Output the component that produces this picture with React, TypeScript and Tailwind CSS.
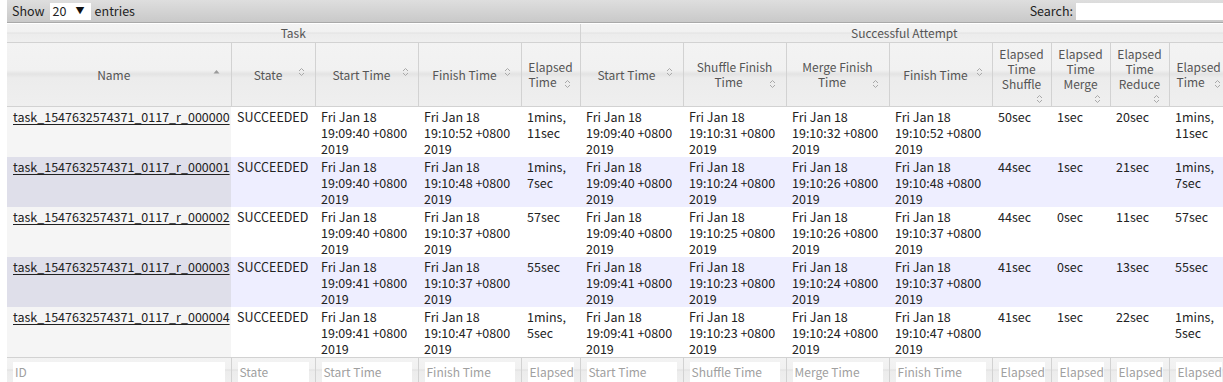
import React from "react";

type Head = {
  lines: string[];
  w: number;
  iconTop: number;
  iconRight: number;
  sorted?: boolean;
  narrow?: boolean;
  lastPr?: number;
};

const heads: Head[] = [
  { lines: ["Name"], w: 224, iconTop: 26, iconRight: 11, sorted: true },
  { lines: ["State"], w: 84, iconTop: 24, iconRight: 10 },
  { lines: ["Start Time"], w: 103, iconTop: 24, iconRight: 9 },
  { lines: ["Finish Time"], w: 103, iconTop: 24, iconRight: 10 },
  { lines: ["Elapsed", "Time"], w: 59, iconTop: 36, iconRight: 9, narrow: true, lastPr: 16 },
  { lines: ["Start Time"], w: 103, iconTop: 24, iconRight: 10 },
  { lines: ["Shuffle Finish", "Time"], w: 103, iconTop: 36, iconRight: 10, narrow: true, lastPr: 12 },
  { lines: ["Merge Finish", "Time"], w: 103, iconTop: 36, iconRight: 10, narrow: true, lastPr: 11 },
  { lines: ["Finish Time"], w: 103, iconTop: 24, iconRight: 9 },
  { lines: ["Elapsed", "Time", "Shuffle"], w: 59, iconTop: 51, iconRight: 8, narrow: true },
  { lines: ["Elapsed", "Time", "Merge"], w: 59, iconTop: 51, iconRight: 9, narrow: true },
  { lines: ["Elapsed", "Time", "Reduce"], w: 59, iconTop: 51, iconRight: 9, narrow: true },
  { lines: ["Elapsed", "Time"], w: 59, iconTop: 36, iconRight: 7, narrow: true, lastPr: 16 },
];

const filters = [
  "ID",
  "State",
  "Start Time",
  "Finish Time",
  "Elapsed",
  "Start Time",
  "Shuffle Time",
  "Merge Time",
  "Finish Time",
  "Elapsed",
  "Elapsed",
  "Elapsed",
  "Elapsed",
];

type Row = {
  id: string;
  start: string;
  finish: string;
  elapsed: string[];
  aStart: string;
  shuffle: string;
  merge: string;
  aFinish: string;
  es: string;
  em: string;
  er: string;
};

const rows: Row[] = [
  { id: "000000", start: "19:09:40", finish: "19:10:52", elapsed: ["1mins,", "11sec"], aStart: "19:09:40", shuffle: "19:10:31", merge: "19:10:32", aFinish: "19:10:52", es: "50sec", em: "1sec", er: "20sec" },
  { id: "000001", start: "19:09:40", finish: "19:10:48", elapsed: ["1mins,", "7sec"], aStart: "19:09:40", shuffle: "19:10:24", merge: "19:10:26", aFinish: "19:10:48", es: "44sec", em: "1sec", er: "21sec" },
  { id: "000002", start: "19:09:40", finish: "19:10:37", elapsed: ["57sec"], aStart: "19:09:40", shuffle: "19:10:25", merge: "19:10:26", aFinish: "19:10:37", es: "44sec", em: "0sec", er: "11sec" },
  { id: "000003", start: "19:09:41", finish: "19:10:37", elapsed: ["55sec"], aStart: "19:09:41", shuffle: "19:10:23", merge: "19:10:24", aFinish: "19:10:37", es: "41sec", em: "0sec", er: "13sec" },
  { id: "000004", start: "19:09:41", finish: "19:10:47", elapsed: ["1mins,", "5sec"], aStart: "19:09:41", shuffle: "19:10:23", merge: "19:10:24", aFinish: "19:10:47", es: "41sec", em: "1sec", er: "22sec" },
];

function SortIcon() {
  return (
    <svg width="7" height="10" viewBox="0 0 7 10" fill="none" stroke="#a8a8a8" strokeWidth="1">
      <path d="M1 4 L3.5 1.5 L6 4" />
      <path d="M1 6 L3.5 8.5 L6 6" />
    </svg>
  );
}

function SortedIcon() {
  return (
    <svg width="7" height="5" viewBox="0 0 7 5">
      <path d="M0.5 4.5 L3.5 1 L6.5 4.5 Z" fill="#9a9a9a" />
    </svg>
  );
}

function DateCell({ t }: { t: string }) {
  return (
    <>
      <div>Fri Jan 18</div>
      <div>{t} +0800</div>
      <div>2019</div>
    </>
  );
}

const headBg =
  "bg-[linear-gradient(to_bottom,#f3f3f3_0%,#f1f1f1_44%,#e3e3e3_50%,#ececec_56%,#efefef_100%)]";

export default function App() {
  const td = "align-top pl-[6px] pr-[2px] pt-[2px] text-left";
  return (
    <div className="w-[1223px] h-[382px] overflow-hidden bg-white font-['Noto_Sans_CJK_SC','Noto_Sans',sans-serif] text-[12.5px] text-[#222]">
      <div className="pl-[7px] w-[1228px]">
        {/* toolbar */}
        <div className="h-[23px] flex items-center justify-between bg-[linear-gradient(to_bottom,#dedede,#c9c9c9)] border-b border-[#a9a9a9] pl-[5px] pr-[4px] leading-[16px]">
          <div className="flex items-center">
            <span>Show</span>
            <div className="ml-[5px] mr-[4px] w-[41px] h-[17px] bg-white flex items-center justify-between pl-[3px] pr-[6px]">
              <span>20</span>
              <span className="text-[9px] text-[#111]">▼</span>
            </div>
            <span>entries</span>
          </div>
          <div className="flex items-center">
            <span>Search:</span>
            <div className="ml-[3px] w-[148px] h-[17px] bg-white" />
          </div>
        </div>
        <table className="table-fixed border-collapse w-[1221px] mt-[1px]">
          <colgroup>
            {heads.map((h, i) => (
              <col key={i} style={{ width: h.w }} />
            ))}
          </colgroup>
          <thead className="text-[12px]">
            <tr className={`h-[18px] ${headBg} text-[#555] font-normal`}>
              <th colSpan={5} className="font-normal text-center border-b border-r border-[#d2d2d2] leading-[17px] p-0">
                Task
              </th>
              <th colSpan={8} className="font-normal text-center border-b border-[#d2d2d2] leading-[17px] p-0">
                Successful Attempt
              </th>
            </tr>
            <tr className={`h-[64px] ${headBg}`}>
              {heads.map((h, i) => (
                <th
                  key={i}
                  className={`relative font-normal text-[#555] text-center leading-[15px] border-b border-r border-[#d2d2d2] p-0 ${
                    h.narrow ? "px-[2px]" : "pl-[10px] pr-[20px]"
                  } ${h.lines.length === 3 ? "pb-[12px]" : ""}`}
                >
                  {h.lines.map((l, j) => (
                    <div
                      key={j}
                      className="whitespace-nowrap"
                      style={j === h.lines.length - 1 && h.lastPr ? { paddingRight: h.lastPr } : undefined}
                    >
                      {l}
                    </div>
                  ))}
                  <span className="absolute flex" style={{ top: h.iconTop, right: h.iconRight }}>
                    {h.sorted ? <SortedIcon /> : <SortIcon />}
                  </span>
                </th>
              ))}
            </tr>
          </thead>
          <tbody className="leading-[16px]">
            {rows.map((r, i) => {
              const odd = i % 2 === 1;
              const rowBg = odd ? "bg-[#eeeeff]" : "bg-white";
              const firstBg = odd ? "bg-[#dfdfea]" : "bg-[#f5f5f5]";
              return (
                <tr key={r.id} className={`h-[50px] ${rowBg}`}>
                  <td className={`${td} ${firstBg}`}>
                    <a className="underline underline-offset-[2px] text-[#222] whitespace-nowrap">
                      task_1547632574371_0117_r_{r.id}
                    </a>
                  </td>
                  <td className={td}>SUCCEEDED</td>
                  <td className={td}>
                    <DateCell t={r.start} />
                  </td>
                  <td className={td}>
                    <DateCell t={r.finish} />
                  </td>
                  <td className={td}>
                    {r.elapsed.map((e, k) => (
                      <div key={k}>{e}</div>
                    ))}
                  </td>
                  <td className={td}>
                    <DateCell t={r.aStart} />
                  </td>
                  <td className={td}>
                    <DateCell t={r.shuffle} />
                  </td>
                  <td className={td}>
                    <DateCell t={r.merge} />
                  </td>
                  <td className={td}>
                    <DateCell t={r.aFinish} />
                  </td>
                  <td className={td}>{r.es}</td>
                  <td className={td}>{r.em}</td>
                  <td className={td}>{r.er}</td>
                  <td className={td}>
                    {r.elapsed.map((e, k) => (
                      <div key={k}>{e}</div>
                    ))}
                  </td>
                </tr>
              );
            })}
          </tbody>
          <tfoot>
            <tr className={`h-[26px] ${headBg}`}>
              {filters.map((f, i) => (
                <td key={i} className="border-t border-r border-[#d2d2d2] align-top pt-[4px] px-[6px]">
                  <div className="h-[21px] bg-white pl-[2px] text-[12px] text-[#a0a0a0] leading-[20px] whitespace-nowrap overflow-hidden">
                    {f}
                  </div>
                </td>
              ))}
            </tr>
          </tfoot>
        </table>
      </div>
    </div>
  );
}
